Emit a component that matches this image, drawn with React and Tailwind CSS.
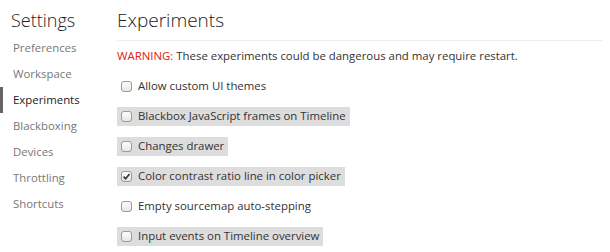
const sections = ["Preferences", "Workspace", "Experiments", "Blackboxing", "Devices", "Throttling", "Shortcuts"];

const experiments = [
    { label: "Allow custom UI themes", hidden: false, checked: false },
    { label: "Blackbox JavaScript frames on Timeline", hidden: true, checked: false },
    { label: "Changes drawer", hidden: true, checked: false },
    { label: "Color contrast ratio line in color picker", hidden: true, checked: true },
    { label: "Empty sourcemap auto-stepping", hidden: false, checked: false },
    { label: "Input events on Timeline overview", hidden: true, checked: false },
];

const Checkbox = ({ checked }) => (
    <span className="w-[11px] h-[11px] rounded-[3px] border border-[#9a9a9a] bg-gradient-to-b from-[#fdfdfd] to-[#e6e6e6] flex items-center justify-center shrink-0">
        {checked && (
            <svg width="9" height="9" viewBox="0 0 9 9">
                <path d="M1.6 4.6 L3.6 6.7 L7.5 1.9" fill="none" stroke="#333" strokeWidth="1.6" />
            </svg>
        )}
    </span>
);

export default function App() {
    return (
        <div className="w-[610px] h-[252px] bg-white flex overflow-hidden text-[#333]" style={{ fontFamily: "'Open Sans', 'Noto Sans', sans-serif" }}>

            {/* sidebar */}
            <div className="w-[117px] shrink-0">
                <h1 className="pl-[11px] pt-[6px] h-[35px] text-[18px] leading-[28px] font-light text-[#222]">Settings</h1>
                <ul>
                    {sections.map(name => (
                        <li
                            key={name}
                            className={
                                "h-[26px] flex items-center pl-[10px] text-[11.4px] border-l-[3px] " +
                                (name === "Experiments" ? "border-[#666] text-[#222]" : "border-transparent text-[#777]")
                            }
                        >
                            {name}
                        </li>
                    ))}
                </ul>
            </div>

            {/* content */}
            <div className="flex-1 pr-[8px]">
                <h2 className="pt-[6px] h-[41px] text-[19px] leading-[28px] font-light text-[#222] border-b border-[#eee]">Experiments</h2>
                <p className="mt-[6px] text-[11.4px] leading-[18px]">
                    <span className="text-[#d21]">WARNING:</span> These experiments could be dangerous and may require restart.
                </p>
                <div className="mt-[6px] flex flex-col items-start">
                    {experiments.map(exp => (
                        <div key={exp.label} className="h-[30px] flex items-center">
                            <label className={"h-[19px] flex items-center gap-[6px] pl-[4px] pr-[4px] text-[11.4px] " + (exp.hidden ? "bg-[#ddd]" : "")}>
                                <Checkbox checked={exp.checked} />
                                <span>{exp.label}</span>
                            </label>
                        </div>
                    ))}
                </div>
            </div>
        </div>
    );
}
